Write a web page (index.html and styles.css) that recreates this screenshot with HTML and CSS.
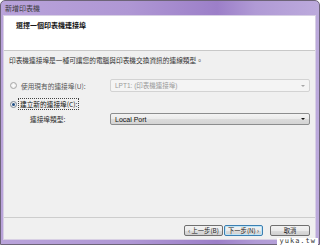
FILE: index.html
```html
<!DOCTYPE html>
<html>
<head>
<meta charset="utf-8">
<title>新增印表機</title>
<link rel="stylesheet" href="styles.css">
</head>
<body>

<div class="window">
	<!-- 標題列 -->
	<div class="titlebar">新增印表機</div>

	<div class="client">
		<div class="header">選擇一個印表機連接埠</div>

		<div class="content">
			<p class="desc">印表機連接埠是一種可讓您的電腦與印表機交換資訊的連線類型。</p>

			<div class="row row_existing">
				<label class="option disabled"><span class="radio"></span>使用現有的連接埠(U):</label>
				<div class="select select_off">LPT1: (印表機連接埠)<span class="arrow"></span></div>
			</div>

			<div class="row row_new">
				<label class="option"><span class="radio checked"></span><span class="focus">建立新的連接埠(C):</span></label>
			</div>

			<div class="row row_type">
				<span class="type_label">連接埠類型:</span>
				<div class="select">Local Port<span class="arrow"></span></div>
			</div>
		</div>

		<div class="footer">
			<button class="btn">&lsaquo; 上一步(B)</button>
			<button class="btn btn_default">下一步(N) &rsaquo;</button>
			<button class="btn btn_cancel">取消</button>
		</div>
	</div>

	<div class="watermark">yuka.tw</div>
</div>

</body>
</html>
```

FILE: styles.css
```css
html, body {
	margin: 0;
	padding: 0;
	font-family: "Noto Sans CJK TC", "Noto Sans", sans-serif;
	color: #2a2a2a;
	background: #fff;
}

.window {
	position: relative;
	width: 320px;
	height: 245px;
	box-sizing: border-box;
	display: flex;
	flex-direction: column;
	border: 1px solid #6d6478;
	border-radius: 5px 5px 0 0;
	background: linear-gradient(90deg, #b9a3da 0%, #af97d4 40%, #9c7fc8 68%, #b09ad5 80%, #bcaadc 100%);
}

.titlebar {
	height: 15px;
	line-height: 15px;
	padding-left: 4px;
	font-size: 7px;
	color: #3a3a3a;
}

.client {
	flex: 1;
	display: flex;
	flex-direction: column;
	margin: 0 4px 5px 3px;
	background: #f0f0f0;
	outline: 1px solid #d8d0e4;
}

/* 上方白色說明區 */
.header {
	height: 35px;
	box-sizing: border-box;
	padding: 4px 12px;
	background: #fff;
	border-bottom: 1px solid #c8c8c8;
	font-size: 7px;
	font-weight: bold;
	line-height: 10px;
	color: #111;
}

.content {
	flex: 1;
	padding: 4px 5px 0 5px;
	font-size: 6.7px;
	line-height: 10px;
}

.desc {
	margin: 0 0 14px 0;
	color: #333;
}

.row {
	display: flex;
	align-items: center;
}
.row_existing {
	height: 13px;
	margin-bottom: 7px;
}
.row_new {
	height: 10px;
	margin-bottom: 4px;
}
.row_type {
	height: 12px;
}

.option {
	display: flex;
	align-items: center;
	width: 101px;
	flex: none;
}
.option.disabled {
	color: #555;
}

.radio {
	width: 5px;
	height: 5px;
	margin: 0 4px 0 1px;
	border: 1px solid #a7a7a7;
	border-radius: 50%;
	background: radial-gradient(#fff, #e4e4e4);
	position: relative;
}
.radio.checked {
	border-color: #7d8996;
}
.radio.checked::after {
	content: "";
	position: absolute;
	left: 1px;
	top: 1px;
	width: 3px;
	height: 3px;
	border-radius: 50%;
	background: #1f4f86;
}

.focus {
	outline: 1px dotted #444;
	padding: 0 1px;
	margin-left: -2px;
	color: #111;
}

.type_label {
	width: 80px;
	padding-left: 21px;
	flex: none;
}

.select {
	position: relative;
	width: 200px;
	height: 100%;
	box-sizing: border-box;
	padding-left: 4px;
	border: 1px solid #8c8d8e;
	border-radius: 2px;
	background: linear-gradient(#f3f3f3 0%, #ebebeb 50%, #dcdcdc 51%, #d4d4d4 100%);
	font-family: "Liberation Sans", "Noto Sans CJK TC", sans-serif;
	font-size: 7px;
	line-height: 11px;
	color: #111;
}
.select_off {
	border-color: #d3d3d3;
	background: #f4f4f4;
	color: #9a9a9a;
	font-size: 6.5px;
	line-height: 12px;
}

.arrow {
	position: absolute;
	right: 4px;
	top: 50%;
	margin-top: -1px;
	border-left: 2px solid transparent;
	border-right: 2px solid transparent;
	border-top: 2px solid #111;
}
.select_off .arrow {
	border-top-color: #a5a5a5;
}

/* 下方按鈕列 */
.footer {
	height: 22px;
	box-sizing: border-box;
	display: flex;
	justify-content: flex-end;
	align-items: flex-start;
	padding: 7px 5px 0 0;
	border-top: 1px solid #cdcdcd;
}

.btn {
	width: 39px;
	height: 11px;
	padding: 0;
	border: 1px solid #707070;
	border-radius: 2px;
	background: linear-gradient(#f2f2f2 0%, #ebebeb 50%, #dddddd 51%, #cfcfcf 100%);
	font-family: "Noto Sans CJK TC", sans-serif;
	font-size: 6.3px;
	line-height: 9px;
	color: #222;
	margin-left: 1px;
}
.btn_default {
	border-color: #3c7fb1;
	box-shadow: inset 0 0 0 1px #bfe5f7;
}
.btn_cancel {
	width: 40px;
	margin-left: 7px;
}

.watermark {
	position: absolute;
	right: 1px;
	bottom: -1px;
	height: 7px;
	padding: 0 2px;
	background: #fff;
	font-family: "DejaVu Sans Mono", monospace;
	font-size: 7px;
	line-height: 7px;
	letter-spacing: 1px;
	color: #333;
}
```
